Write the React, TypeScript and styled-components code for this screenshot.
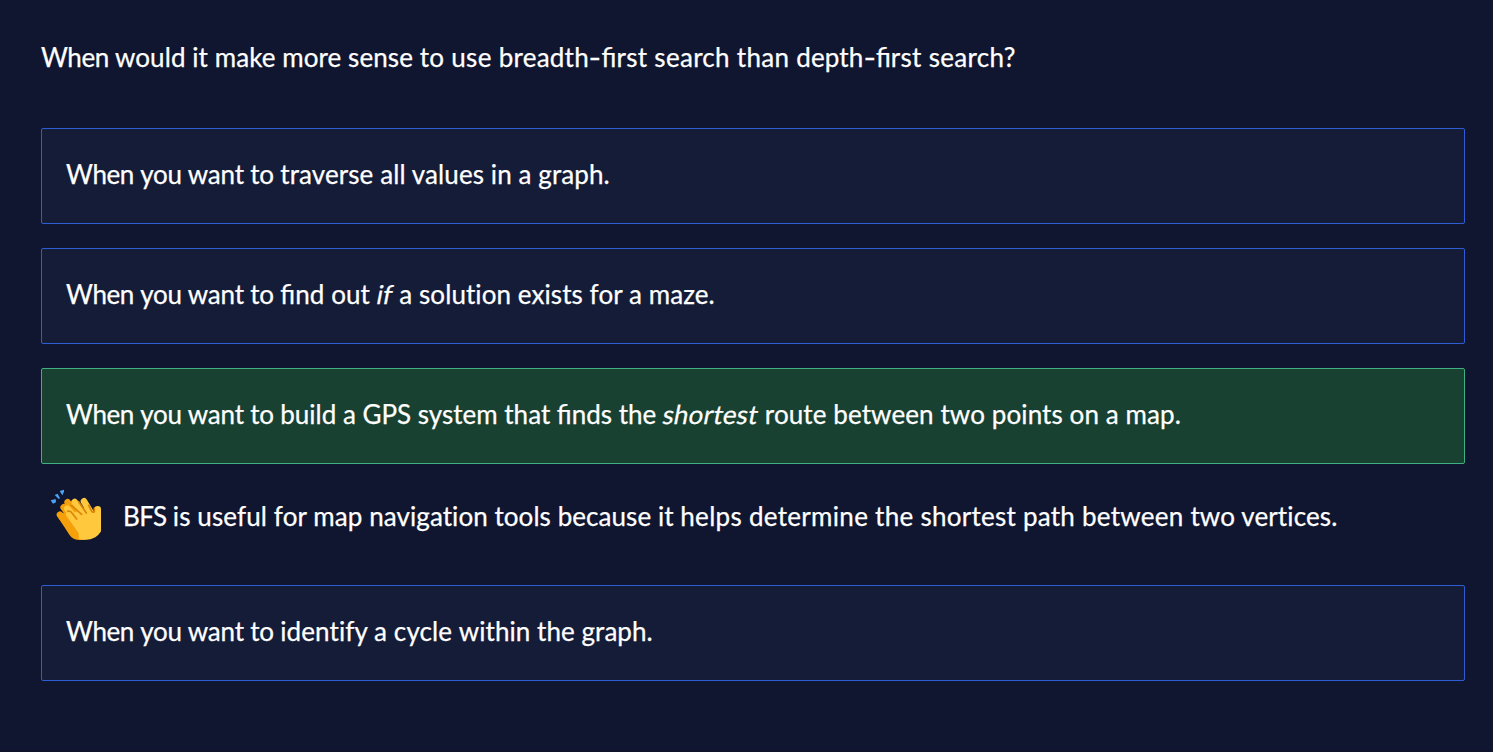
import React from "react";
import styled, { createGlobalStyle } from "styled-components";

const GlobalStyle = createGlobalStyle`
  *, *::before, *::after { box-sizing: border-box; }
  body {
    margin: 0;
    background: #10162f;
    color: #fff;
    font-family: Lato, "Open Sans", sans-serif;
    font-size: 26px;
    line-height: 39px;
    -webkit-text-stroke: 0.25px currentColor;
  }
`;

const Page = styled.main`
  min-height: 752px;
  padding: 38px 28px 0 41px;
  border-bottom: 2px solid #0e132a;
`;

const Line = styled.span`
  white-space: pre;
`;

/* A run of text with its own tracking; zero keeps ligatures such as "fi". */
const Run = styled.span<{ $track: number }>`
  letter-spacing: ${(p) => p.$track}px;
`;

const Hyphen = styled.span`
  display: inline-block;
  margin: 0 1.5px;
  transform: scaleX(1.3);
`;

const Emphasis = styled.em`
  display: inline-block;
  font-style: normal;
  letter-spacing: 0.2px;
  transform: skewX(-11deg);
`;

const Question = styled.h1`
  margin: 0 0 51px;
  font-size: inherit;
  font-weight: 400;
`;

const Answers = styled.div`
  display: flex;
  flex-direction: column;
  gap: 24px;
`;

const Option = styled.button<{ $correct?: boolean }>`
  display: block;
  width: 100%;
  height: 96px;
  padding: 0 24px 4px;
  text-align: left;
  font: inherit;
  color: inherit;
  border: 1px solid ${(p) => (p.$correct ? "#3fb083" : "#2e5dd3")};
  border-radius: 2px;
  background: ${(p) => (p.$correct ? "#184132" : "#151c38")};
`;

const Feedback = styled.div`
  display: flex;
  height: 73px;
  padding: 0 0 0 8px;
  gap: 19px;
`;

const FeedbackText = styled.p`
  margin: 9px 0 0;
`;

const Clap = styled.svg`
  display: block;
  flex: none;
  width: 55px;
  height: 55px;
`;

const ClapIcon = () => (
  <Clap viewBox="27 24 165 165" fill="none" strokeLinecap="round" strokeLinejoin="round" aria-hidden="true">
    <path d="M32 61 47 57 48 67 39 71ZM44 45 53 41 60 55 56 57ZM59 33 72 29 72 35 67 46Z" fill="#4aa3f5" />
    <path d="M60 104 100 158M71 82 120 150M83 67 135 140" stroke="#f59f0a" strokeWidth="20" />
    <path d="M52 108 88 164Q98 180 120 180L145 178 130 110 90 90Z" fill="#f59f0a" />
    <path d="M88 103 125 155M82 86 130 145M104 66 145 130M132 64 165 120M173 88V150" stroke="#ffc83d" strokeWidth="20" />
    <path d="M82 108 112 150Q118 160 116 177Q144 184 166 172Q183 162 183 145V88L160 95 145 75 120 90Z" fill="#ffc83d" />
    <path d="M83 94Q91 92 96 99L110 117M93 77Q98 77 102 83L125 103M116 65 139 99M146 76 155 94Q160 99 163 95V84" stroke="#d98609" strokeWidth="5" />
  </Clap>
);

const WhenYouWantTo = () => (
  <>
    <Run $track={-0.4}>When </Run>
    <Run $track={-0.21}>you want to </Run>
  </>
);

export default function App() {
  return (
    <>
      <GlobalStyle />
      <Page>
        <Question>
          <Line>
            <Run $track={-0.45}>When </Run>
            <Run $track={0.08}>would it make more sense </Run>
            <Run $track={0.3}>to use </Run>
            <Run $track={0.25}>breadth</Run>
            <Hyphen>-</Hyphen>fi
            <Run $track={0.3}>rst search than </Run>
            <Run $track={0.1}>depth</Run>
            <Hyphen>-</Hyphen>fi
            <Run $track={0.3}>rst search?</Run>
          </Line>
        </Question>
        <Answers>
          <Option>
            <Line>
              <WhenYouWantTo />
              <Run $track={0.1}>traverse all values in a graph.</Run>
            </Line>
          </Option>
          <Option>
            <Line>
              <WhenYouWantTo />fi
              <Run $track={0.1}>nd out </Run>
              <Emphasis>if</Emphasis>
              <Run $track={0.08}> a solution exists for a maze.</Run>
            </Line>
          </Option>
          <Option $correct>
            <Line>
              <WhenYouWantTo />
              build a GPS system that finds the{" "}
              <Emphasis>shortest</Emphasis>
              <Run $track={0.1}> route between two points on a map.</Run>
            </Line>
          </Option>
          <Feedback>
            <ClapIcon />
            <FeedbackText>
              <Line>
                <Run $track={-0.5}>BFS </Run>
                <Run $track={0.11}>is useful for map </Run>
                <Run $track={0.06}>navigation tools because it </Run>
                <Run $track={0.3}>helps determine the </Run>
                <Run $track={0.25}>shortest path between </Run>
                <Run $track={0.12}>two vertices.</Run>
              </Line>
            </FeedbackText>
          </Feedback>
          <Option>
            <Line>
              <WhenYouWantTo />
              <Run $track={0.1}>identify a cycle </Run>
              <Run $track={0.05}>within the graph.</Run>
            </Line>
          </Option>
        </Answers>
      </Page>
    </>
  );
}
